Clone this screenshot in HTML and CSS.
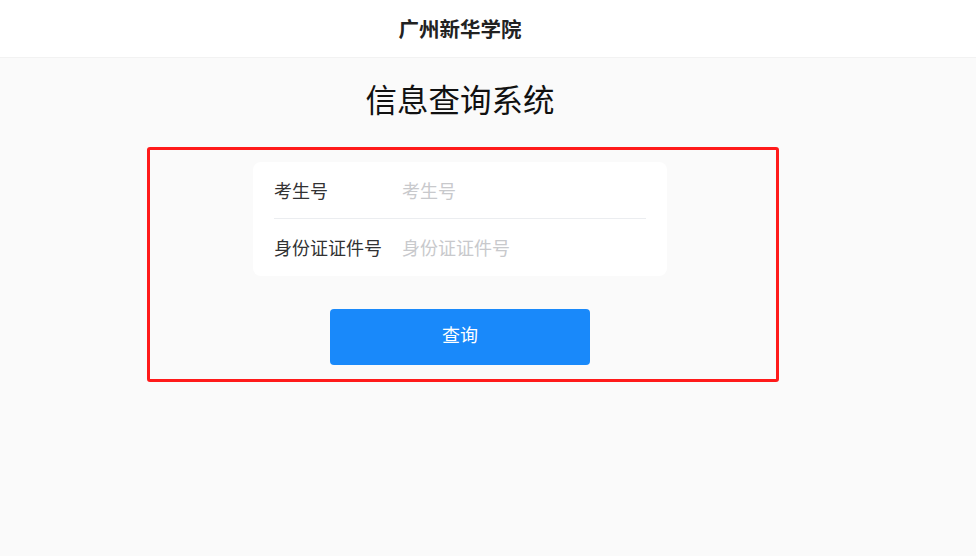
FILE: index.html
```html
<!DOCTYPE html>
<html lang="zh-CN">
  <head>
    <meta charset="UTF-8" />
    <meta name="viewport" content="width=device-width, initial-scale=1.0" />
    <title>信息查询系统</title>
    <link rel="stylesheet" href="styles.css">
  </head>
  <body>
    <header class="header">
      <div class="header-inner">广州新华学院</div>
    </header>

    <main class="main">
      <h1 class="title">信息查询系统</h1>

      <div class="query-box">
        <div class="card">
          <div class="field">
            <label class="field-label" for="examNo">考生号</label>
            <input class="field-input" id="examNo" type="text" placeholder="考生号" />
          </div>
          <div class="field">
            <label class="field-label" for="idNo">身份证证件号</label>
            <input class="field-input" id="idNo" type="text" placeholder="身份证证件号" />
          </div>
        </div>

        <button class="submit-btn" type="button">查询</button>
      </div>
    </main>
  </body>
</html>
```

FILE: styles.css
```css
body {
  margin: 0;
  font-family: "Noto Sans CJK SC", "Noto Sans", sans-serif;
  background-color: #fafafa;
  color: #323233;
}

.header {
  height: 57px;
  background-color: #fff;
  border-bottom: 1px solid #f2f2f2;
}

.header-inner {
  width: 920px;
  line-height: 56px;
  text-align: center;
  font-size: 20.5px;
  font-weight: 700;
  color: #222;
}

.main {
  width: 920px;
}

.title {
  margin: 17px 0 0;
  text-align: center;
  font-size: 31.5px;
  line-height: 46px;
  font-weight: 400;
  color: #111;
}

.query-box {
  box-sizing: border-box;
  width: 632px;
  margin: 26px 0 0 147px;
  padding: 12px 0 14px 103px;
  border: 3px solid #ff1a1a;
  border-radius: 3px;
}

.card {
  width: 414px;
  box-sizing: border-box;
  padding: 0 21px;
  background-color: #fff;
  border-radius: 8px;
}

.field {
  display: flex;
  align-items: center;
  height: 56px;
}

.field + .field {
  height: 57px;
  border-top: 1px solid #ebedf0;
}

.field-label {
  width: 128px;
  flex-shrink: 0;
  font-size: 18px;
  line-height: 24px;
  padding-bottom: 1px;
  color: #323233;
}

.field-input {
  flex: 1;
  min-width: 0;
  padding: 0 0 1px;
  border: none;
  outline: none;
  background: transparent;
  font-family: inherit;
  font-size: 18px;
  line-height: 24px;
  color: #323233;
}

.field-input::placeholder {
  color: #c8c9cc;
}

.submit-btn {
  display: block;
  width: 260px;
  height: 56px;
  margin: 33px 0 0 77px;
  padding: 0 0 6px;
  border: none;
  border-radius: 4px;
  background-color: #1989fa;
  color: #fff;
  font-family: inherit;
  font-size: 18px;
  cursor: pointer;
}
```
